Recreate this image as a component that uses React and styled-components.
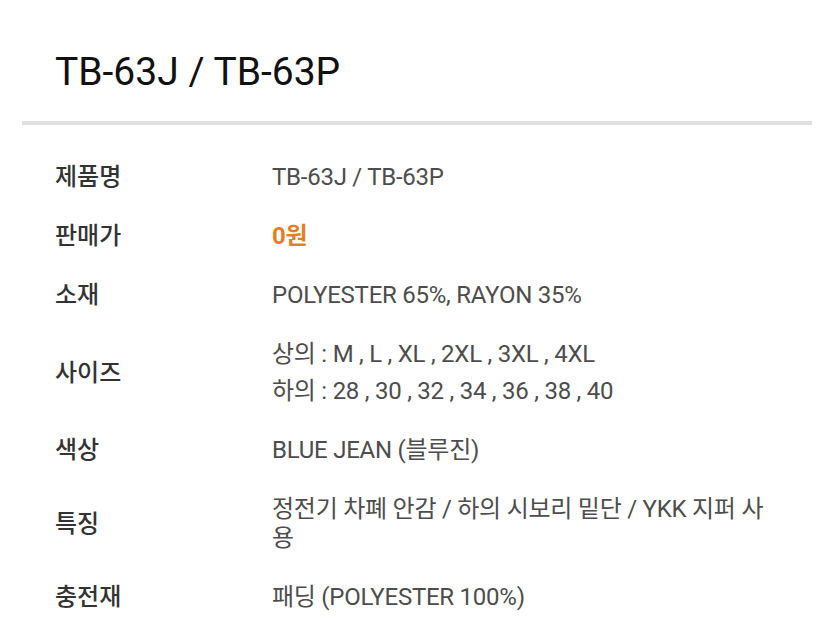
import React from "react";
import styled, { createGlobalStyle } from "styled-components";

const Global = createGlobalStyle`
  html, body { margin: 0; padding: 0; background: #fff; }
  body { font-family: Roboto, "Noto Sans CJK KR", sans-serif; }
`;

const Page = styled.div`
  width: 835px;
  height: 644px;
  overflow: hidden;
  background: #fff;
`;

const Title = styled.h1`
  margin: 0;
  padding: 49px 0 26px 55px;
  font-family: Roboto, "Noto Sans CJK KR", sans-serif;
  font-size: 39px;
  font-weight: 400;
  line-height: 46px;
  color: #111;
`;

const Divider = styled.hr`
  margin: 0 23px 0 22px;
  border: 0;
  height: 4px;
  background: #e0e0e0;
`;

const Table = styled.div`
  padding: 23px 0 0 55px;
  display: flex;
  flex-direction: column;
`;

const Row = styled.div`
  display: grid;
  grid-template-columns: 217px 505px;
  align-items: center;
  padding: 15px 0;
`;

const Label = styled.div`
  font-size: 24px;
  font-weight: 500;
  line-height: 29px;
  color: #333;
`;

const Value = styled.div`
  font-size: 24px;
  font-weight: ${(p) => (p.$accent ? 700 : 400)};
  line-height: 29px;
  color: ${(p) => (p.$accent ? "#e47f22" : "#4d4d4d")};
  word-break: break-all;
  letter-spacing: -0.25px;
`;

const Line = styled.div`
  & + & { margin-top: 8px; }
`;

const rows = [
  { label: "제품명", value: ["TB-63J / TB-63P"] },
  { label: "판매가", value: ["0원"], accent: true },
  { label: "소재", value: ["POLYESTER 65%, RAYON 35%"] },
  { label: "사이즈", value: ["상의 : M , L , XL , 2XL , 3XL , 4XL", "하의 : 28 , 30 , 32 , 34 , 36 , 38 , 40"] },
  { label: "색상", value: ["BLUE JEAN (블루진)"] },
  { label: "특징", value: ["정전기 차폐 안감 / 하의 시보리 밑단 / YKK 지퍼 사용"] },
  { label: "충전재", value: ["패딩 (POLYESTER 100%)"] },
];

export default function App() {
  return (
    <Page>
      <Global />
      <Title>TB-63J / TB-63P</Title>
      <Divider />
      <Table>
        {rows.map((r) => (
          <Row key={r.label}>
            <Label>{r.label}</Label>
            <Value $accent={r.accent}>
              {r.value.map((v) => (
                <Line key={v}>{v}</Line>
              ))}
            </Value>
          </Row>
        ))}
      </Table>
    </Page>
  );
}
